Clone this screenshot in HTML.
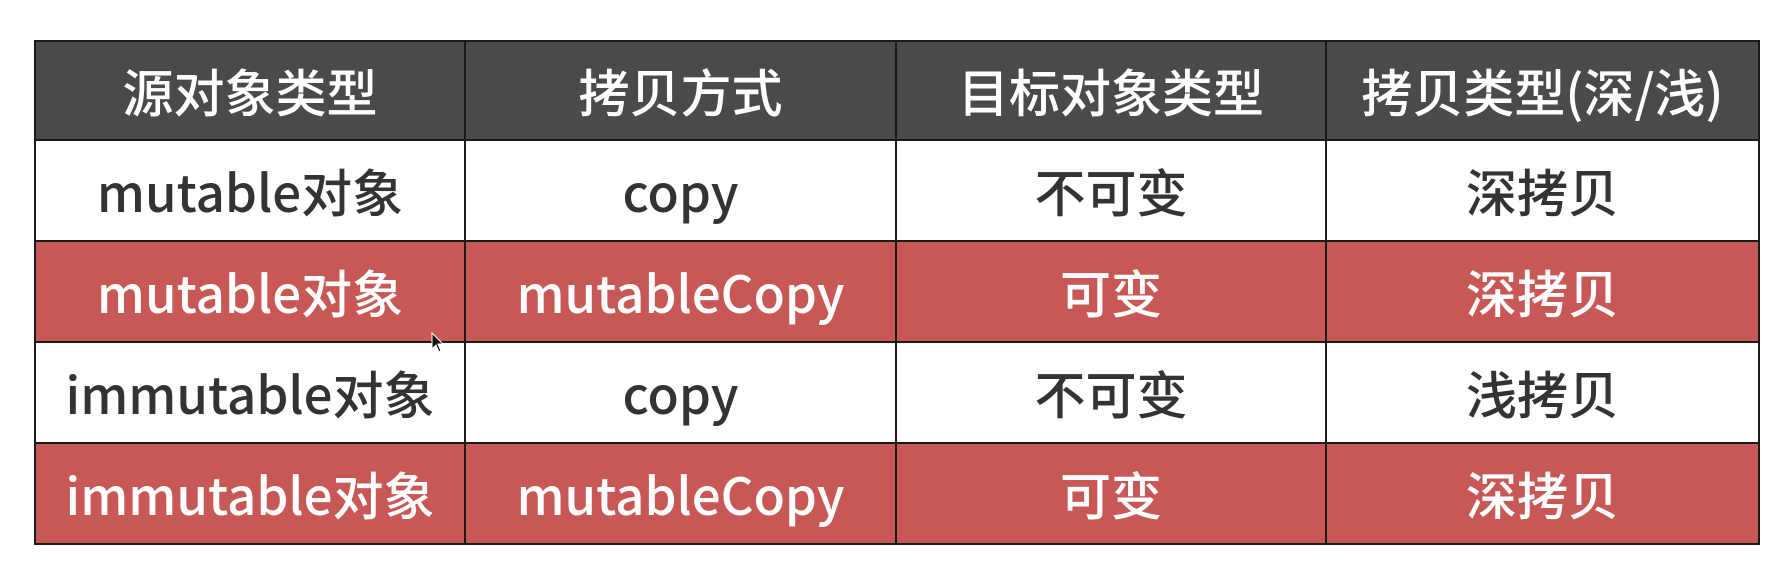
<!DOCTYPE html>
<html><head><meta charset="utf-8"><style>
html,body{margin:0;padding:0;background:#fff;width:1784px;height:574px;overflow:hidden}
table{position:absolute;left:34px;top:40px;border-collapse:collapse;table-layout:fixed;width:1724px}
td{border:2px solid #1a1a1a;text-align:center;vertical-align:middle;padding:0;font-family:"Noto Sans CJK SC","Liberation Sans",sans-serif;font-size:51px;font-weight:500;color:#333;height:99px;line-height:1;}
tr.h td{background:#4a4a4a;color:#fff;height:97px}
tr.r td{background:#c85856;color:#fff}
tr.w td{background:#fff}
</style></head><body>
<table>
<colgroup><col style="width:430px"><col style="width:431px"><col style="width:430px"><col style="width:433px"></colgroup>
<tr class="h"><td>源对象类型</td><td>拷贝方式</td><td>目标对象类型</td><td>拷贝类型(深/浅)</td></tr>
<tr class="w"><td>mutable对象</td><td>copy</td><td>不可变</td><td>深拷贝</td></tr>
<tr class="r"><td>mutable对象</td><td>mutableCopy</td><td>可变</td><td>深拷贝</td></tr>
<tr class="w"><td>immutable对象</td><td>copy</td><td>不可变</td><td>浅拷贝</td></tr>
<tr class="r"><td>immutable对象</td><td>mutableCopy</td><td>可变</td><td>深拷贝</td></tr>
</table>
<svg style="position:absolute;left:431px;top:332px" width="14" height="22" viewBox="0 0 14 22"><path d="M1 1 L1 17 L5 13 L8 20 L10 19 L7 12 L12 12 Z" fill="#111" stroke="#fff" stroke-width="1"/></svg>
</body></html>
